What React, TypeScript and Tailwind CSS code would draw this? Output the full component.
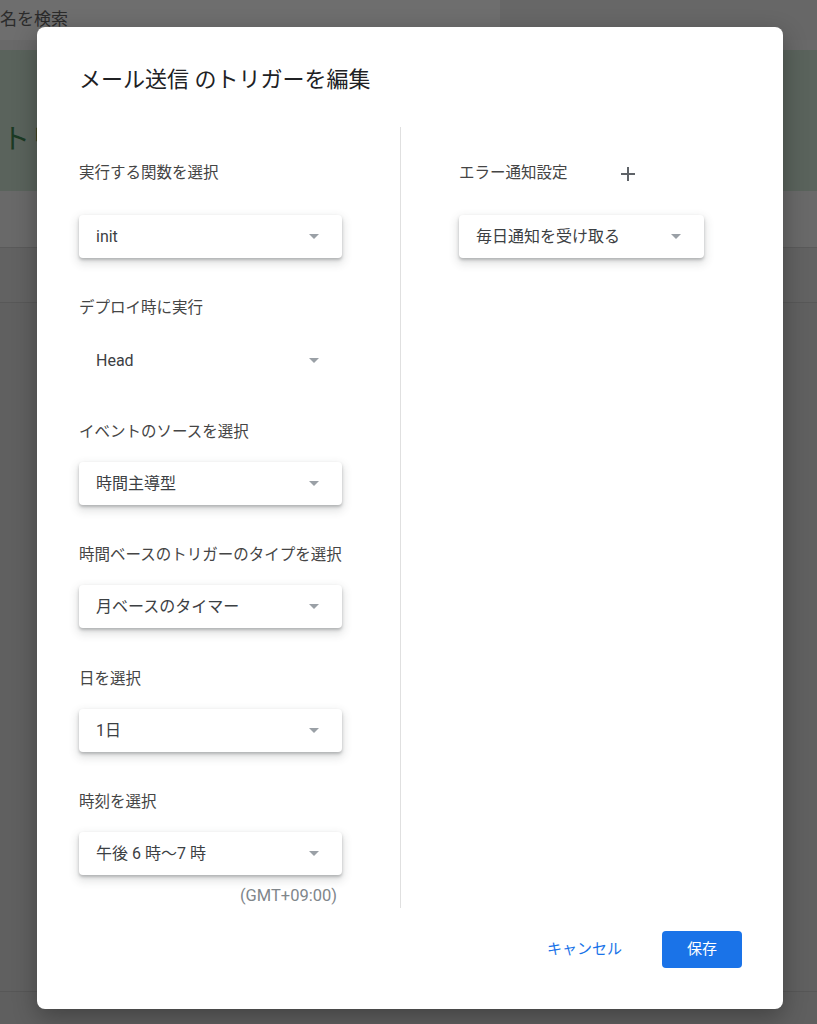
import React from "react";

const font = { fontFamily: 'Roboto, "Noto Sans CJK JP", sans-serif' };

// 小さな下向き三角
function Caret() {
  return (
    <svg width="10" height="5" viewBox="0 0 10 5" className="shrink-0">
      <path d="M0 0 L10 0 L5 5 Z" fill="#9aa0a6" />
    </svg>
  );
}

function Select({ value, width = "w-[263px]", flat = false }: { value: string; width?: string; flat?: boolean }) {
  return (
    <div
      className={
        width +
        " h-[43px] flex items-center justify-between pl-[17px] pr-[23px] rounded-[4px] bg-white text-[16px] text-[#3c4043] " +
        (flat ? "" : "shadow-[0_2px_3px_rgba(60,64,67,0.3),0_4px_8px_2px_rgba(60,64,67,0.15)]")
      }
    >
      <span>{value}</span>
      <Caret />
    </div>
  );
}

function Label({ children, className = "" }: { children: React.ReactNode; className?: string }) {
  return <div className={"h-[22px] leading-[22px] text-[15.5px] text-[#454545] " + className}>{children}</div>;
}

export default function App() {
  return (
    <div className="relative w-[817px] h-[1024px] overflow-hidden bg-[#5f5f5f]" style={font}>
      {/* 背景のページ（オーバーレイで暗くなっている） */}
      <div className="flex flex-col">
        <div className="flex h-[40px]">
          <div className="w-[500px] bg-[#6e6e6e] flex items-center">
            <span className="text-[17px] text-[#2b2b2b]">名を検索</span>
          </div>
          <div className="flex-1 bg-[#676767]" />
        </div>
        <div className="h-[10px] bg-[#696969]" />
        <div className="h-[141px] bg-[#5a635c] flex items-end pb-[30px]">
          <span className="ml-[2px] text-[28px] text-[#1c3a24]">トリガー</span>
        </div>
        <div className="h-[57px] bg-[#696969] border-b border-[#5a5a5a]" />
        <div className="h-[55px] bg-[#626262] border-b border-[#585858]" />
        <div className="h-[689px] bg-[#606060] border-b border-[#575757]" />
      </div>

      {/* ダイアログ */}
      <div className="absolute left-[37px] top-[27px] w-[746px] h-[982px] rounded-[8px] bg-white shadow-[0_8px_24px_rgba(0,0,0,0.3)] flex flex-col">
        <h1 className="pl-[42px] pt-[39px] h-[100px] text-[22px] leading-[28px] text-[#202124]">
          メール送信 のトリガーを編集
        </h1>

        <div className="flex h-[781px]">
          {/* 左カラム */}
          <div className="w-[364px] pl-[42px] border-r border-[#e0e0e0] flex flex-col">
            <Label className="mt-[35px]">実行する関数を選択</Label>
            <div className="mt-[31px]">
              <Select value="init" />
            </div>

            <Label className="mt-[39px]">デプロイ時に実行</Label>
            <div className="mt-[20px]">
              <Select value="Head" flat />
            </div>

            <Label className="mt-[39px]">イベントのソースを選択</Label>
            <div className="mt-[19px]">
              <Select value="時間主導型" />
            </div>

            <Label className="mt-[39px]">時間ベースのトリガーのタイプを選択</Label>
            <div className="mt-[19px]">
              <Select value="月ベースのタイマー" />
            </div>

            <Label className="mt-[40px]">日を選択</Label>
            <div className="mt-[19px]">
              <Select value="1日" />
            </div>

            <Label className="mt-[39px]">時刻を選択</Label>
            <div className="mt-[19px]">
              <Select value="午後 6 時〜7 時" />
            </div>
            <div className="w-[263px] mt-[10px] pr-[5px] text-right text-[16.5px] leading-[22px] text-[#80868b]">
              (GMT+09:00)
            </div>
          </div>

          {/* 右カラム */}
          <div className="pl-[58px] flex flex-col">
            <div className="mt-[35px] flex items-center">
              <Label>エラー通知設定</Label>
              <svg width="14" height="14" viewBox="0 0 14 14" className="ml-[53px] mt-[2px]">
                <path d="M7 0 V14 M0 7 H14" stroke="#5f6368" strokeWidth="2" />
              </svg>
            </div>
            <div className="mt-[31px]">
              <Select value="毎日通知を受け取る" width="w-[245px]" />
            </div>
          </div>
        </div>

        {/* ボタン */}
        <div className="mt-[23px] pr-[41px] flex justify-end items-center gap-[24px]">
          <button className="h-[37px] px-[16px] text-[15px] text-[#1a73e8]">キャンセル</button>
          <button className="h-[37px] w-[80px] rounded-[4px] bg-[#1a73e8] text-[15px] text-white">保存</button>
        </div>
      </div>
    </div>
  );
}
